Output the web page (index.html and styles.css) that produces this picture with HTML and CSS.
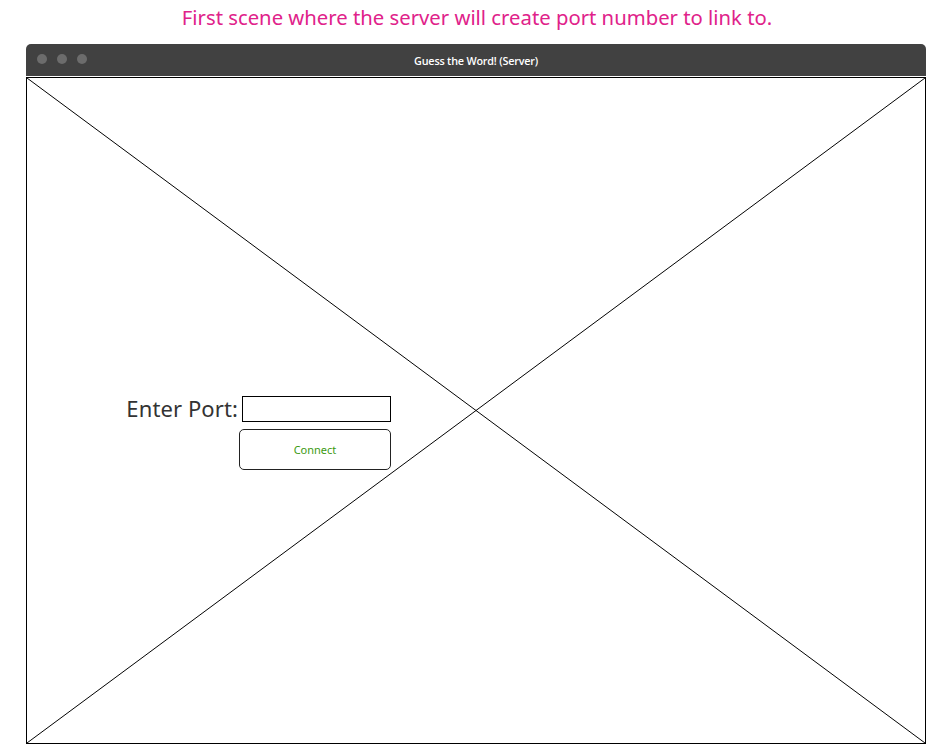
FILE: index.html
```html
<!DOCTYPE html>
<html>
<head>
<meta charset="utf-8">
<link rel="stylesheet" href="styles.css">
</head>
<body>
<h1 class="caption">First scene where the server will create port number to link to.</h1>
<div class="window">
  <div class="titlebar">
    <div class="dots"><span class="dot"></span><span class="dot"></span><span class="dot"></span></div>
    <div class="title">Guess the Word! (Server)</div>
  </div>
  <div class="content">
    <svg class="cross" viewBox="0 0 100 100" preserveAspectRatio="none">
      <line x1="0" y1="0" x2="100" y2="100" vector-effect="non-scaling-stroke"/>
      <line x1="100" y1="0" x2="0" y2="100" vector-effect="non-scaling-stroke"/>
    </svg>
    <div class="form">
      <label class="label">Enter Port:</label>
      <div class="input"></div>
      <div class="button">Connect</div>
    </div>
  </div>
</div>
</body>
</html>
```

FILE: styles.css
```css
html, body {
  margin: 0;
  padding: 0;
  background: #ffffff;
}
body {
  width: 939px;
  height: 756px;
  overflow: hidden;
  font-family: "Noto Sans", "Open Sans", sans-serif;
}
.caption {
  margin: 0;
  height: 44px;
  padding-top: 3px;
  box-sizing: border-box;
  text-align: center;
  font-weight: 400;
  font-size: 20.3px;
  line-height: 28px;
  color: #e0228a;
  padding-left: 15px;
}
.window {
  margin-left: 26px;
  width: 900px;
}
.titlebar {
  position: relative;
  height: 32px;
  background: #414141;
  border-radius: 5px 5px 0 0;
  display: flex;
  align-items: center;
  justify-content: center;
  border-bottom: 1px solid #ffffff;
}
.dots {
  position: absolute;
  left: 11px;
  top: 10px;
  display: flex;
  gap: 10px;
}
.dot {
  width: 10px;
  height: 10px;
  border-radius: 50%;
  background: #6c6c6c;
}
.title {
  color: #ffffff;
  font-family: "Open Sans", sans-serif;
  font-size: 10.8px;
  font-weight: 600;
  letter-spacing: -0.2px;
  margin-left: 0;
}
.content {
  position: relative;
  height: 667px;
  box-sizing: border-box;
  border: 1.5px solid #000000;
  padding-top: 318px;
  padding-left: 99px;
}
.cross {
  position: absolute;
  left: 0;
  top: 0;
  width: 100%;
  height: 100%;
}
.cross line {
  stroke: #000000;
  stroke-width: 1;
}
.form {
  position: relative;
  display: grid;
  grid-template-columns: 114px 152px;
  row-gap: 7px;
}
.label {
  justify-self: end;
  margin-right: 2px;
  font-size: 22px;
  line-height: 24px;
  color: #333333;
  white-space: nowrap;
  letter-spacing: 0.1px;
}
.input {
  margin-left: 2px;
  width: 149px;
  height: 26px;
  box-sizing: border-box;
  border: 1px solid #000000;
  background: #ffffff;
}
.button {
  grid-column: 2;
  margin-left: -1px;
  width: 152px;
  height: 41px;
  box-sizing: border-box;
  border: 1px solid #222222;
  border-radius: 5px;
  background: #ffffff;
  display: flex;
  align-items: center;
  justify-content: center;
  font-size: 11px;
  color: #3d9a12;
}
```
